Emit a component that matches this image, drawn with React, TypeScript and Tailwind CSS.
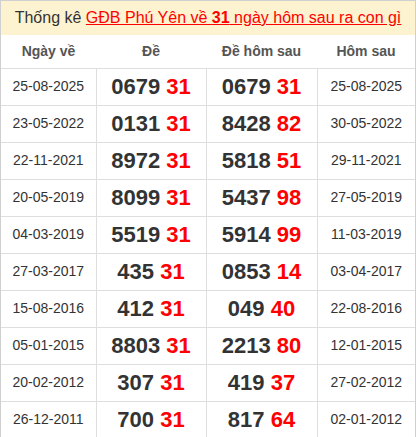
import React from "react";

const rows: [string, string, string, string, string, string][] = [
  ["25-08-2025", "0679", "31", "0679", "31", "25-08-2025"],
  ["23-05-2022", "0131", "31", "8428", "82", "30-05-2022"],
  ["22-11-2021", "8972", "31", "5818", "51", "29-11-2021"],
  ["20-05-2019", "8099", "31", "5437", "98", "27-05-2019"],
  ["04-03-2019", "5519", "31", "5914", "99", "11-03-2019"],
  ["27-03-2017", "435", "31", "0853", "14", "03-04-2017"],
  ["15-08-2016", "412", "31", "049", "40", "22-08-2016"],
  ["05-01-2015", "8803", "31", "2213", "80", "12-01-2015"],
  ["20-02-2012", "307", "31", "419", "37", "27-02-2012"],
  ["26-12-2011", "700", "31", "817", "64", "02-01-2012"],
];

export default function App() {
  return (
    <div className="w-[416px] bg-white" style={{ fontFamily: '"Liberation Sans", Arial, sans-serif' }}>
      <div className="border border-[#cfcfcf] w-[416px]">
        <div className="h-[34px] bg-[#fdf3d0] flex items-center justify-center text-[16px] text-[#333] leading-none">
          <span>
            Thống kê{" "}
            <a className="text-[#ff0000] underline">
              GĐB Phú Yên về <b>31</b> ngày hôm sau ra con gì
            </a>
          </span>
        </div>
        <table className="w-full border-collapse table-fixed">
          <colgroup>
            <col className="w-[95px]" />
            <col className="w-[110px]" />
            <col className="w-[111px]" />
            <col />
          </colgroup>
          <thead>
            <tr className="h-[33px] text-[14px] font-bold text-[#555]">
              <th className="font-bold">Ngày về</th>
              <th className="font-bold">Đề</th>
              <th className="font-bold">Đề hôm sau</th>
              <th className="font-bold">Hôm sau</th>
            </tr>
          </thead>
          <tbody>
            {rows.map((r, i) => (
              <tr key={i} className="h-[37px] border-t border-[#dedede]">
                <td className="text-center text-[14px] text-[#333] border-r border-[#dedede]">{r[0]}</td>
                <td className="text-center text-[22px] font-bold text-[#333] border-r border-[#dedede]">
                  {r[1]} <span className="text-[#ff0000]">{r[2]}</span>
                </td>
                <td className="text-center text-[22px] font-bold text-[#333] border-r border-[#dedede]">
                  {r[3]} <span className="text-[#ff0000]">{r[4]}</span>
                </td>
                <td className="text-center text-[14px] text-[#333]">{r[5]}</td>
              </tr>
            ))}
          </tbody>
        </table>
      </div>
    </div>
  );
}
